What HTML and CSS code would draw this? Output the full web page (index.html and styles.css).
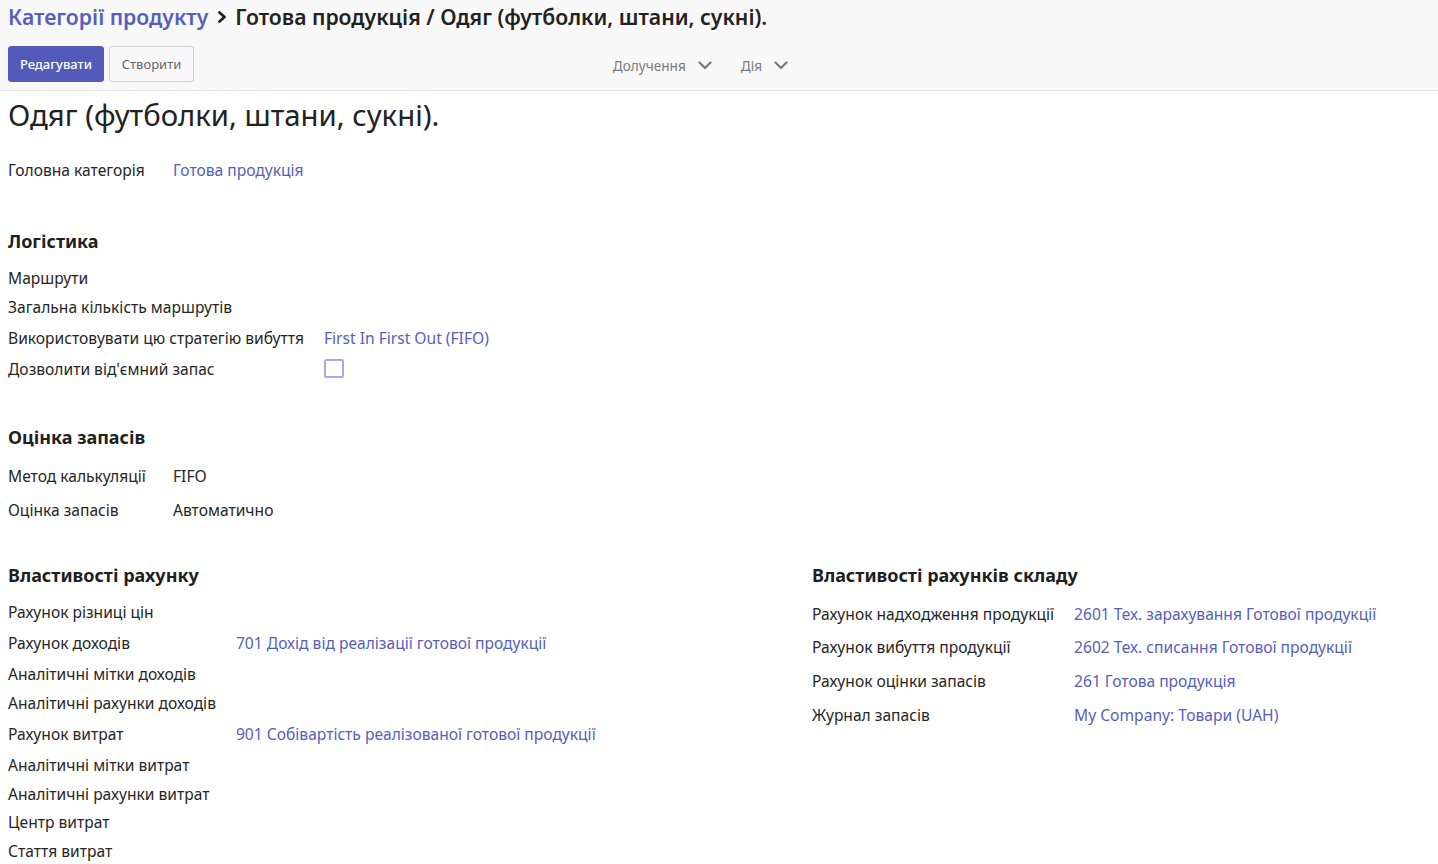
FILE: index.html
```html
<!DOCTYPE html>
<html lang="uk">
<head>
<meta charset="utf-8">
<title>Одяг (футболки, штани, сукні).</title>
<link rel="stylesheet" href="styles.css">
</head>
<body>
<header class="cp">
  <div class="crumbs">
    <a class="crumb-link" href="#">Категорії продукту</a>
    <svg class="crumb-sep" width="10" height="14" viewBox="0 0 10 14"><path d="M2.5 2.5 L7.5 7 L2.5 11.5" fill="none" stroke="#222" stroke-width="2.8" stroke-linecap="round" stroke-linejoin="round"/></svg>
    <span class="crumb-cur">Готова продукція / Одяг (футболки, штани, сукні).</span>
  </div>
  <div class="cp-bottom">
    <div class="btns">
      <button class="btn btn-primary">Редагувати</button>
      <button class="btn btn-secondary">Створити</button>
    </div>
    <div class="menus">
      <span class="menu">Долучення <svg class="chev" width="14" height="9" viewBox="0 0 14 9"><path d="M1.5 1.5 L7 7 L12.5 1.5" fill="none" stroke="#777" stroke-width="2.2" stroke-linecap="round" stroke-linejoin="round"/></svg></span>
      <span class="menu">Дія <svg class="chev" width="14" height="9" viewBox="0 0 14 9"><path d="M1.5 1.5 L7 7 L12.5 1.5" fill="none" stroke="#777" stroke-width="2.2" stroke-linecap="round" stroke-linejoin="round"/></svg></span>
    </div>
  </div>
</header>

<main class="sheet">
  <h1 class="title">Одяг (футболки, штани, сукні).</h1>

  <div class="fields min top">
    <div class="row filled"><span class="lbl">Головна категорія</span><a class="val link" href="#">Готова продукція</a></div>
  </div>

  <h2 class="sec">Логістика</h2>
  <div class="fields logi">
    <div class="row"><span class="lbl">Маршрути</span><span class="val"></span></div>
    <div class="row"><span class="lbl">Загальна кількість маршрутів</span><span class="val"></span></div>
    <div class="row filled"><span class="lbl">Використовувати цю стратегію вибуття</span><a class="val link" href="#">First In First Out (FIFO)</a></div>
    <div class="row"><span class="lbl">Дозволити від'ємний запас</span><span class="val"><span class="checkbox"></span></span></div>
  </div>

  <h2 class="sec">Оцінка запасів</h2>
  <div class="fields min val-sec">
    <div class="row filled"><span class="lbl">Метод калькуляції</span><span class="val">FIFO</span></div>
    <div class="row filled"><span class="lbl">Оцінка запасів</span><span class="val">Автоматично</span></div>
  </div>

  <div class="cols">
    <section class="col">
      <h2 class="sec">Властивості рахунку</h2>
      <div class="fields">
        <div class="row"><span class="lbl">Рахунок різниці цін</span><span class="val"></span></div>
        <div class="row filled"><span class="lbl">Рахунок доходів</span><a class="val link" href="#">701 Дохід від реалізації готової продукції</a></div>
        <div class="row"><span class="lbl">Аналітичні мітки доходів</span><span class="val"></span></div>
        <div class="row"><span class="lbl">Аналітичні рахунки доходів</span><span class="val"></span></div>
        <div class="row filled"><span class="lbl">Рахунок витрат</span><a class="val link" href="#">901 Собівартість реалізованої готової продукції</a></div>
        <div class="row"><span class="lbl">Аналітичні мітки витрат</span><span class="val"></span></div>
        <div class="row"><span class="lbl">Аналітичні рахунки витрат</span><span class="val"></span></div>
        <div class="row short"><span class="lbl">Центр витрат</span><span class="val"></span></div>
        <div class="row"><span class="lbl">Стаття витрат</span><span class="val"></span></div>
      </div>
    </section>
    <section class="col">
      <h2 class="sec">Властивості рахунків складу</h2>
      <div class="fields stock">
        <div class="row filled"><span class="lbl">Рахунок надходження продукції</span><a class="val link" href="#">2601 Тех. зарахування Готової продукції</a></div>
        <div class="row filled"><span class="lbl">Рахунок вибуття продукції</span><a class="val link" href="#">2602 Тех. списання Готової продукції</a></div>
        <div class="row filled"><span class="lbl">Рахунок оцінки запасів</span><a class="val link" href="#">261 Готова продукція</a></div>
        <div class="row filled"><span class="lbl">Журнал запасів</span><a class="val link" href="#">My Company: Товари (UAH)</a></div>
      </div>
    </section>
  </div>
</main>
</body>
</html>
```

FILE: styles.css
```css
* { box-sizing: border-box; }
html, body { margin: 0; padding: 0; background: #fff; }
body {
  font-family: "Noto Sans", "Open Sans", sans-serif;
  color: #212529;
  font-size: 15.6px;
}
a { text-decoration: none; }

.cp {
  background: #f8f8f8;
  border-bottom: 1px solid #e2e2e2;
  height: 91px;
  padding: 0 8px;
}
.crumbs {
  height: 33px;
  display: flex;
  align-items: center;
  font-size: 21.2px;
  font-weight: 600;
}
.crumb-link { color: #5660bc; }
.crumb-sep { margin: 0 8px 0 9px; }
.crumb-cur { color: #222; }

.cp-bottom {
  display: flex;
  align-items: center;
  width: 808px;
  justify-content: space-between;
  margin-top: 13px;
}
.btns { display: flex; gap: 5px; }
.btn {
  font-family: "Noto Sans", "Open Sans", sans-serif;
  font-size: 13px;
  height: 36px;
  border-radius: 3px;
  padding: 0 10px;
  cursor: pointer;
}
.btn-primary {
  background: #525bb9;
  border: 1px solid #525bb9;
  color: #fff;
  font-weight: 500;
  width: 96px;
}
.btn-secondary {
  background: #f9f9fb;
  border: 1px solid #cfcfd4;
  color: #666;
  width: 85px;
}
.menus { display: flex; gap: 29px; padding-right: 28px; padding-top: 2px; }
.menu {
  color: #7b7b7b;
  font-size: 13.6px;
  display: flex;
  align-items: center;
  gap: 12px;
}

.sheet { padding: 0 8px; }
.title {
  font-size: 29.3px;
  font-weight: 400;
  margin: 4px 0 0;
  line-height: 40px;
  color: #222;
}
.sec {
  font-size: 18px;
  font-weight: 700;
  margin: 0 0 9px;
  line-height: 26px;
  color: #1f1f1f;
}
.fields {
  display: grid;
  grid-template-columns: max-content 1fr;
  column-gap: 20px;
  margin-bottom: 40px;
}
.fields.min .lbl { min-width: 145px; }
.fields.top { margin-top: 18px; margin-bottom: 42px; }
.fields.logi { margin-bottom: 41px; }
.fields.val-sec { margin-bottom: 35px; }
.row { display: contents; }
.lbl, .val {
  height: 29px;
  display: flex;
  align-items: center;
  line-height: 20px;
}
.row.filled .lbl, .row.filled .val { height: 33px; }
.fields.val-sec .row.filled .lbl, .fields.val-sec .row.filled .val { height: 34px; }
.fields.stock .row.filled .lbl, .fields.stock .row.filled .val { height: 33.6px; }
.row.short .lbl, .row.short .val { height: 28px; }
.lbl { color: #262626; }
.val { color: #262626; }
.link { color: #5660bc; }
.checkbox {
  width: 20px;
  height: 19px;
  border: 2px solid #a7aae3;
  border-radius: 2px;
  display: inline-block;
}

.cols {
  display: grid;
  grid-template-columns: 804px 1fr;
}
.col .fields { margin-bottom: 0; }
.fields .row:first-child .lbl { }
```
